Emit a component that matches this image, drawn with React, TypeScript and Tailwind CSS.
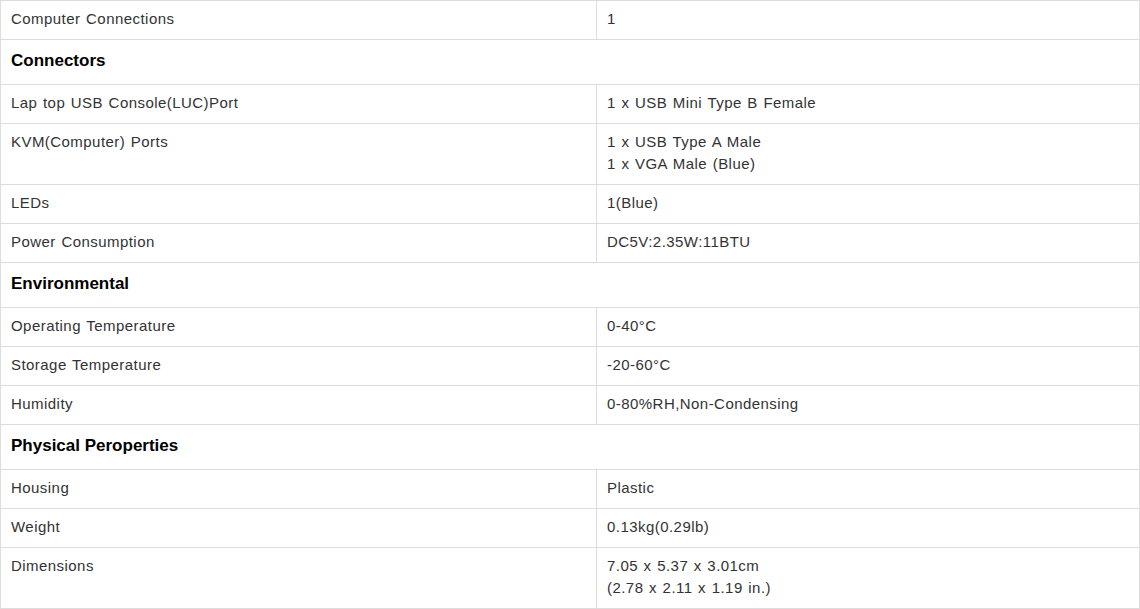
import React from "react";

type Row =
  | { kind: "head"; title: string }
  | { kind: "row"; label: string; value: string[] };

const rows: Row[] = [
  { kind: "row", label: "Computer Connections", value: ["1"] },
  { kind: "head", title: "Connectors" },
  { kind: "row", label: "Lap top USB Console(LUC)Port", value: ["1 x USB Mini Type B Female"] },
  { kind: "row", label: "KVM(Computer) Ports", value: ["1 x USB Type A Male", "1 x VGA Male (Blue)"] },
  { kind: "row", label: "LEDs", value: ["1(Blue)"] },
  { kind: "row", label: "Power Consumption", value: ["DC5V:2.35W:11BTU"] },
  { kind: "head", title: "Environmental" },
  { kind: "row", label: "Operating Temperature", value: ["0-40°C"] },
  { kind: "row", label: "Storage Temperature", value: ["-20-60°C"] },
  { kind: "row", label: "Humidity", value: ["0-80%RH,Non-Condensing"] },
  { kind: "head", title: "Physical Peroperties" },
  { kind: "row", label: "Housing", value: ["Plastic"] },
  { kind: "row", label: "Weight", value: ["0.13kg(0.29lb)"] },
  { kind: "row", label: "Dimensions", value: ["7.05 x 5.37 x 3.01cm", "(2.78 x 2.11 x 1.19 in.)"] },
];

const App = () => {
  return (
    <div className="w-[1140px] bg-white font-['Liberation_Sans',Arial,sans-serif]">
      <div className="border border-[#dddddd]">
        {rows.map((r, i) =>
          r.kind === "head" ? (
            <div
              key={i}
              className="border-b border-[#dddddd] px-[10px] pt-[9px] pb-[11px] text-[17px] font-bold leading-[24px] text-black last:border-b-0"
            >
              {r.title}
            </div>
          ) : (
            <div
              key={i}
              className="grid grid-cols-[596px_1fr] border-b border-[#dddddd] text-[15px] leading-[22px] tracking-[0.45px] [word-spacing:1px] text-[#333333] last:border-b-0"
            >
              <div className="border-r border-[#dddddd] px-[10px] pt-[7px] pb-[9px]">{r.label}</div>
              <div className="px-[10px] pt-[7px] pb-[9px]">
                {r.value.map((v, j) => (
                  <div key={j}>{v}</div>
                ))}
              </div>
            </div>
          )
        )}
      </div>
    </div>
  );
};

export default App;
